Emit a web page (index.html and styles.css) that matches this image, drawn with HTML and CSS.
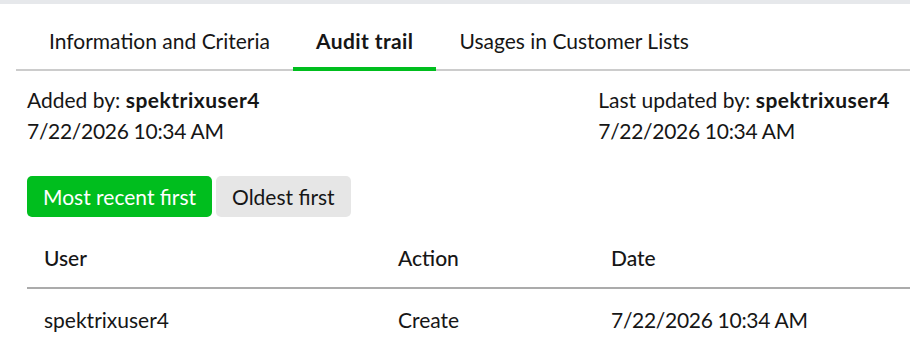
FILE: index.html
```html
<!DOCTYPE html>
<html>
<head>
    <meta charset="utf-8">
    <title>Customer List - Audit trail</title>
    <link rel="stylesheet" href="styles.css">
</head>
<body>
    <div class="topbar"></div>
    <nav class="tabs">
        <a class="tab" href="#">Information and Criteria</a>
        <a class="tab active" href="#">Audit trail</a>
        <a class="tab" href="#">Usages in Customer Lists</a>
    </nav>
    <section class="content">
        <div class="meta">
            <div class="meta-item">
                Added by: <strong>spektrixuser4</strong><br>
                <span class="date">7/22/2026 10:34 AM</span>
            </div>
            <div class="meta-item">
                Last updated by: <strong>spektrixuser4</strong><br>
                <span class="date">7/22/2026 10:34 AM</span>
            </div>
        </div>
        <div class="sort">
            <button class="sort-btn selected">Most recent first</button>
            <button class="sort-btn">Oldest first</button>
        </div>
        <table class="audit">
            <thead>
                <tr>
                    <th class="col-user">User</th>
                    <th class="col-action">Action</th>
                    <th>Date</th>
                </tr>
            </thead>
            <tbody>
                <tr>
                    <td>spektrixuser4</td>
                    <td>Create</td>
                    <td><span class="date">7/22/2026 10:34 AM</span></td>
                </tr>
            </tbody>
        </table>
    </section>
</body>
</html>
```

FILE: styles.css
```css
body {
    margin: 0;
    font-family: Lato, "Liberation Sans", sans-serif;
    font-size: 21px;
    line-height: 31px;
    color: #161616;
    background: #fff;
    overflow: hidden;
}
.topbar {
    height: 4px;
    background-color: #e6e8eb;
}
.tabs {
    display: flex;
    margin-left: 16px;
    padding-left: 10px;
    border-bottom: 2px solid #cccccc;
}
.tab {
    padding: 22px 23px 13px;
    margin-bottom: -2px;
    border-bottom: 2px solid transparent;
    color: #161616;
    text-decoration: none;
    line-height: 30px;
}
.tab.active {
    font-weight: 700;
    letter-spacing: 0.4px;
    border-bottom: 4px solid #00be1e;
    padding-bottom: 11px;
}
.content {
    padding: 13px 20px 0 27px;
}
.meta {
    display: flex;
    justify-content: space-between;
}
.meta strong {
    font-weight: 700;
    letter-spacing: 0.5px;
}
.date {
    letter-spacing: -0.3px;
}
.sort {
    display: flex;
    gap: 4px;
    margin-top: 30px;
}
.sort-btn {
    font: inherit;
    line-height: 31px;
    padding: 5px 16px;
    border: none;
    border-radius: 5px;
    background-color: #e6e6e6;
    color: #161616;
    cursor: pointer;
}
.sort-btn.selected {
    background-color: #00be1e;
    color: #fff;
}
.audit {
    width: calc(100% + 20px);
    margin-top: 11px;
    border-collapse: collapse;
    text-align: left;
}
.audit th {
    font-weight: 500;
    padding: 14px 17px;
    border-bottom: 2px solid #ababab;
}
.audit td {
    padding: 15px 17px;
}
.col-user {
    width: 320px;
}
.col-action {
    width: 179px;
}
```
